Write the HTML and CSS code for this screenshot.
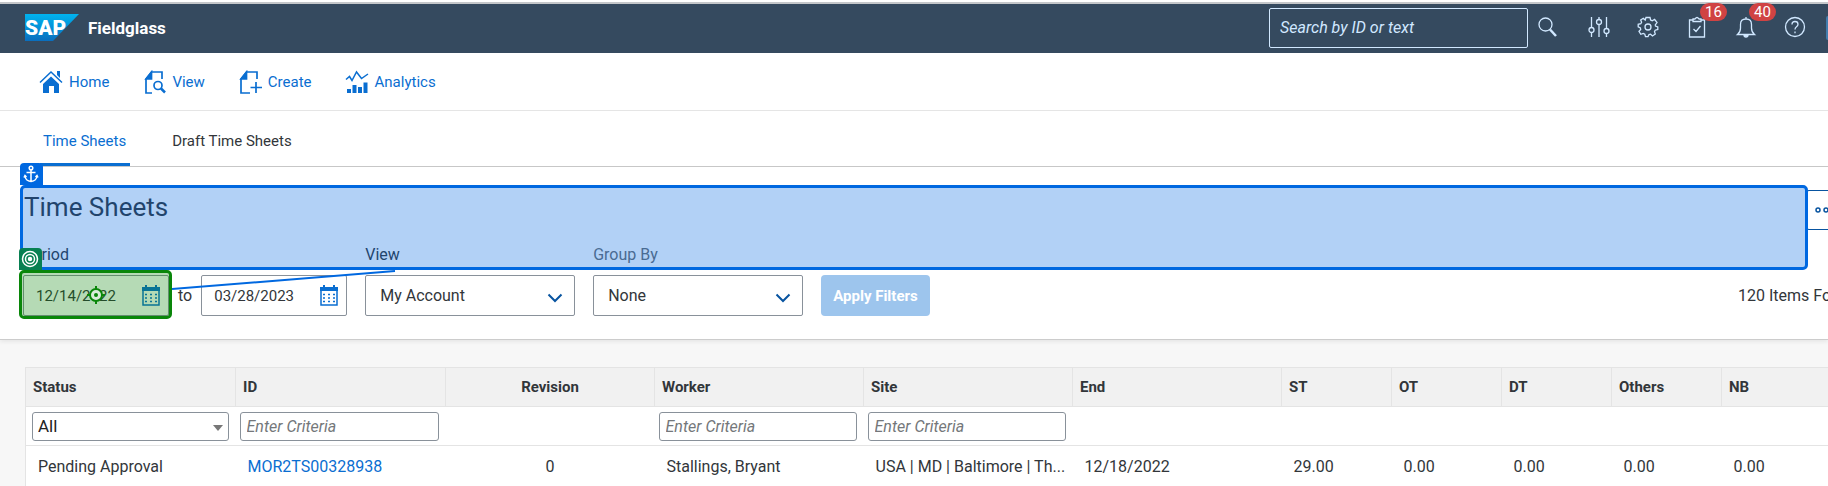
FILE: index.html
```html
<!DOCTYPE html>
<html lang="en">
<head>
<meta charset="utf-8">
<title>Time Sheets - SAP Fieldglass</title>
<link rel="stylesheet" href="styles.css">
</head>
<body>
<header class="shell">
  <a class="brand" href="#">
    <svg class="logo" viewBox="0 0 54 27" width="54" height="27" role="img" aria-label="SAP">
      <defs><linearGradient id="sap" x1="0" y1="0" x2="0" y2="1"><stop offset="0" stop-color="#00b4f0"/><stop offset="1" stop-color="#0a6ebe"/></linearGradient></defs>
      <path d="M0 0H54L28 27H0Z" fill="url(#sap)"/>
      <text x="0" y="21" class="logo-text">SAP</text>
    </svg>
    <span class="product">Fieldglass</span>
  </a>
  <div class="tools">
    <input class="search" type="text" placeholder="Search by ID or text" aria-label="Search by ID or text">
    <button class="tool tool-search" aria-label="Search"><svg viewBox="0 0 22 22"><circle cx="8.500" cy="8.500" r="6.500"/><path d="M13 13.500L19 20" stroke-width="2.500"/></svg></button>
    <button class="tool" aria-label="Preferences"><svg viewBox="0 0 22 22"><path d="M3.500 1V11.500M3.500 17V21M11 1V3M11 9V21M18.500 1V12M18.500 18V21"/><circle cx="3.500" cy="14" r="2.500"/><circle cx="11" cy="6" r="2.500"/><circle cx="18.500" cy="15" r="2.500"/></svg></button>
    <button class="tool" aria-label="Settings"><svg viewBox="0 0 22 22"><path d="M9 1.500H13L13.600 4L15.200 4.700L17.600 3.400L20 6.600L18.300 8.800L18.500 10L20.800 11V13.500L18.200 14.200L17.500 15.600L18.300 18L15.500 20L13.500 18.200L12 18.500L11 20.700H8.500L7.800 18.200L6.300 17.500L3.800 18.300L2 15.400L3.700 13.500L3.400 12L1.200 10.800V8.300L3.800 7.700L4.600 6.200L3.700 3.900L6.300 2.300L8.200 4Z"/><circle cx="11" cy="11" r="3"/></svg></button>
    <button class="tool" aria-label="Tasks"><svg viewBox="0 0 22 22"><path d="M7 4H3.500V21H18.500V4H15M7 3H9Q11 0 13 3H15V5.500H7ZM7.500 13L10 15.500L14.500 10"/></svg><span class="badge">16</span></button>
    <button class="tool" aria-label="Notifications"><svg viewBox="0 0 22 22"><path d="M2.500 18.500H19.500Q16.500 16 16.500 12V8.500Q16.500 3 11 3Q5.500 3 5.500 8.500V12Q5.500 16 2.500 18.500ZM11 3V1"/><path d="M9 19A2 2 0 0 0 13 19Z" fill="currentColor"/></svg><span class="badge">40</span></button>
    <button class="tool" aria-label="Help"><svg viewBox="0 0 22 22"><circle cx="11" cy="11" r="9.500"/><path d="M8 8.500Q8 5.500 11 5.500Q14 5.500 14 8.300Q14 9.800 12.500 10.800Q11 11.800 11 13.500M11 15.500V17.200"/></svg></button>
    <span class="avatar"></span>
  </div>
</header>
<nav class="menu">
  <a href="#"><svg viewBox="0 0 24 24"><path d="M4 14L12 6.500L20 14V23H15V16H10V23H4Z" fill="currentColor" stroke="none"/><path d="M1 12.500L12 2L23 12.500" stroke-width="1.500"/><path d="M18 1H21V8L18 5Z" fill="currentColor" stroke="none"/></svg>Home</a>
  <a href="#"><svg viewBox="0 0 24 24"><path d="M10 23H4V9L9.500 2H20V9"/><path d="M4 9L9.500 2V9Z" fill="currentColor"/><circle cx="16" cy="15.500" r="4"/><path d="M19 18.500L23 22.500" stroke-width="2.500"/></svg>View</a>
  <a href="#"><svg viewBox="0 0 24 24"><path d="M12 23H3V9L8.500 2H19V9"/><path d="M3 9L8.500 2V9Z" fill="currentColor"/><path d="M18 12V23M12.500 17.500H24"/></svg>Create</a>
  <a href="#"><svg viewBox="0 0 24 24"><path d="M1 9.500L4.500 6.500L7 10.500L11.500 2L16.500 8.500L23 4" stroke-width="1.500"/><path d="M2 19H6V23H2ZM7.500 15H11.500V23H7.500ZM13 17H17V23H13ZM18.500 12.500H22.500V23H18.500Z" fill="currentColor" stroke="none"/></svg>Analytics</a>
</nav>
<nav class="tabs">
  <a class="tab active" href="#">Time Sheets</a>
  <a class="tab" href="#">Draft Time Sheets</a>
</nav>
<main>
  <section class="panel">
    <div class="heading">
      <h1>Time Sheets</h1>
      <button class="more" aria-label="More actions"><svg viewBox="0 0 24 8" width="24" height="8"><circle cx="3" cy="4" r="2"/><circle cx="11" cy="4" r="2"/><circle cx="19" cy="4" r="2"/></svg></button>
    </div>
    <form class="filters">
      <div class="field">
        <label for="from">Period</label>
        <div class="range">
          <span class="date"><input id="from" type="text" value="12/14/2022"><svg viewBox="0 0 18 21"><path d="M1 5V20H17V5Z"/><path d="M0 2H18V6H0ZM3 0H5V2H3ZM13 0H15V2H13Z" fill="currentColor" stroke="none"/><path d="M3 9.500H15M3 13H15M3 16.500H15" stroke-dasharray="2 3"/></svg></span>
          <span>to</span>
          <span class="date"><input type="text" value="03/28/2023" aria-label="Period end"><svg viewBox="0 0 18 21"><path d="M1 5V20H17V5Z"/><path d="M0 2H18V6H0ZM3 0H5V2H3ZM13 0H15V2H13Z" fill="currentColor" stroke="none"/><path d="M3 9.500H15M3 13H15M3 16.500H15" stroke-dasharray="2 3"/></svg></span>
        </div>
      </div>
      <div class="field">
        <label for="view">View</label>
        <span class="pick"><select id="view"><option>My Account</option></select><svg viewBox="0 0 16 10"><path d="M1.500 1.500L8 8L14.500 1.500"/></svg></span>
      </div>
      <div class="field">
        <label for="group" class="muted">Group By</label>
        <span class="pick"><select id="group"><option>None</option></select><svg viewBox="0 0 16 10"><path d="M1.500 1.500L8 8L14.500 1.500"/></svg></span>
      </div>
      <button class="apply" type="button" disabled>Apply Filters</button>
      <span class="count">120 Items Fo</span>
    </form>
    <div class="mark anchor-mark"><span class="tag"><svg viewBox="0 0 22 22"><circle cx="11" cy="5" r="1.800"/><path d="M11 7V18M6.500 9.500H15.500M5 13Q5.500 18 11 18.500Q16.500 18 17 13M4 14.500L5 12.500L6.500 14M15.500 14L17 12.500L18 14.500"/></svg></span></div>
    <svg class="link-line" viewBox="0 0 224 20" width="224" height="20"><path d="M0 19L223 1"/></svg>
    <div class="mark target-mark"><span class="tag"><svg viewBox="0 0 22 22"><circle cx="11" cy="11" r="7.500"/><circle cx="11" cy="11" r="4.500"/><circle cx="11" cy="11" r="1.500" fill="currentColor"/></svg></span>
      <svg class="pin" viewBox="0 0 20 20" width="20" height="20"><circle cx="10" cy="10" r="6" fill="#d8ecd8"/><circle cx="10" cy="10" r="2" fill="currentColor" stroke="none"/><path d="M10 1V4M10 16V19M1 10H4M16 10H19"/></svg></div>
  </section>
  <section class="results">
    <table>
      <colgroup><col class="wider"><col class="wider"><col class="wide"><col class="wide"><col class="wide"><col class="wide"><col class="num"><col class="num"><col class="num"><col class="num"><col></colgroup>
      <thead>
        <tr><th>Status</th><th>ID</th><th class="center">Revision</th><th>Worker</th><th>Site</th><th>End</th><th>ST</th><th>OT</th><th>DT</th><th>Others</th><th>NB</th></tr>
        <tr class="criteria"><td><span class="all"><select aria-label="Status"><option>All</option></select></span></td><td><input type="text" placeholder="Enter Criteria" aria-label="ID"></td><td></td><td><input type="text" placeholder="Enter Criteria" aria-label="Worker"></td><td><input type="text" placeholder="Enter Criteria" aria-label="Site"></td><td></td><td></td><td></td><td></td><td></td><td></td></tr>
      </thead>
      <tbody>
        <tr><td>Pending Approval</td><td><a href="#">MOR2TS00328938</a></td><td class="center">0</td><td>Stallings, Bryant</td><td>USA | MD | Baltimore | Th...</td><td>12/18/2022</td><td>29.00</td><td>0.00</td><td>0.00</td><td>0.00</td><td>0.00</td></tr>
      </tbody>
    </table>
  </section>
</main>
</body>
</html>
```
FILE: styles.css
```css
* { box-sizing: border-box; }
body { margin: 0; background: #f7f7f7; color: #32363a; font: 16px/20px Roboto, "Noto Sans", sans-serif; overflow: hidden; }
a { color: #0a6ed1; text-decoration: none; }
svg { fill: none; stroke: currentColor; }
button, input, select { font: inherit; color: inherit; margin: 0; }
button { cursor: pointer; }

.shell { display: flex; justify-content: space-between; align-items: center; height: 53px; padding: 0 0 0 25px; background: #354a5f; border-top: 2px solid #fff; box-shadow: inset 0 2px #c4c7ca; color: #d1e8ff; }
.brand { display: flex; align-items: center; gap: 9px; color: #fff; }
.logo { stroke: none; }
.logo-text { font: 900 21px Roboto, sans-serif; fill: #fff; }
.product { font-size: 17px; font-weight: 700; }
.tools { display: flex; align-items: center; }
.search { width: 259px; height: 40px; padding: 0 10px; background: transparent; border: 1px solid #d1e8ff; border-radius: 2px; }
.search::placeholder { color: #d1e8ff; font-style: italic; opacity: 1; }
.tool { position: relative; width: 22px; height: 22px; margin: 0 27px 2px 0; padding: 0; border: 0; background: none; }
.tool svg { display: block; width: 22px; height: 22px; stroke-width: 1.3; }
.tool-search { margin: 0 29px 2px 9px; }
.badge { position: absolute; left: 14px; top: -13px; min-width: 27px; height: 18px; border-radius: 9px; background: #d04343; color: #fff; font-size: 15px; line-height: 18px; text-align: center; }
.avatar { width: 2px; height: 24px; margin-left: -7px; background: #427cac; border-radius: 2px 0 0 2px; }

.menu { display: flex; gap: 33px; height: 58px; padding: 1px 39px 0; align-items: center; background: #fff; border-bottom: 1px solid #e5e5e5; font-size: 15px; }
.menu a { display: flex; align-items: center; gap: 6px; }
.menu svg { width: 24px; height: 24px; stroke-width: 1.7; }
.tabs { display: flex; gap: 39px; height: 56px; padding: 0 40px; background: #fff; border-bottom: 1px solid #c8c8c8; font-size: 15px; }
.tab { padding: 20px 4px 12px 3px; color: #32363a; }
.tab.active { color: #0a6ed1; border-bottom: 3px solid #0a6ed1; }

.panel { position: relative; padding: 23px 0 23px 23px; background: #fff; border-bottom: 1px solid #ccc; box-shadow: 0 2px 4px #0001; }
.heading { display: flex; justify-content: space-between; height: 55px; }
h1 { margin: 0; padding-left: 1px; font-size: 26px; font-weight: 400; line-height: 34px; }
.more { width: 22px; height: 40px; padding: 0 0 0 8px; background: #fff; border: 1px solid #0854a0; border-right: 0; border-radius: 3px 0 0 3px; color: #0854a0; overflow: hidden; }
.more svg { display: block; stroke-width: 1.5; }
.filters { display: flex; gap: 18px; align-items: flex-end; }
.field { display: flex; flex-direction: column; gap: 10px; }
.field label { line-height: 20px; }
.muted { color: #6a6d70; }
.range { display: flex; align-items: center; gap: 9px; }
.date, .pick { position: relative; display: block; }
.date input { display: block; width: 146px; height: 41px; padding: 0 12px; border: 1px solid #89919a; border-radius: 2px; background: #fff; font-size: 15px; }
.date svg { position: absolute; right: 9px; top: 10px; width: 18px; height: 21px; color: #0a6ed1; stroke-width: 1.5; }
.pick select { display: block; appearance: none; width: 210px; height: 41px; padding: 0 14px; border: 1px solid #89919a; border-radius: 2px; background: #fff; }
.pick svg { position: absolute; right: 12px; top: 18px; width: 16px; height: 10px; color: #0854a0; stroke-width: 2; pointer-events: none; }
.apply { height: 41px; padding: 0 12px; border: 0; border-radius: 4px; background: #9dc5ed; color: #fff; font-size: 15px; font-weight: 700; }
.count { width: 90px; margin-left: auto; line-height: 41px; white-space: nowrap; }

.mark { position: absolute; border: 3px solid; border-radius: 5px; }
.anchor-mark { left: 20px; right: 20px; top: 18px; height: 85px; border-color: #0068e0; background: rgba(0, 104, 224, .3); }
.target-mark { left: 19px; top: 103px; width: 153px; height: 49px; border-color: #098609; background: rgba(9, 134, 9, .3); color: #098609; }
.tag { position: absolute; left: -3px; bottom: calc(100% + 3px); width: 23px; height: 22px; border-radius: 4px 4px 0 0; color: #fff; background: #0068e0; }
.target-mark .tag { background: #088052; }
.tag svg { display: block; height: 22px; stroke-width: 1.5; }
.pin { position: absolute; left: 64px; top: 12px; stroke-width: 2; }
.link-line { position: absolute; left: 172px; top: 103px; color: #0068e0; stroke-width: 2; }

.results { padding: 27px 0 0 25px; }
table { width: 100%; table-layout: fixed; border-collapse: collapse; background: #fff; border-left: 1px solid #e4e4e4; }
.wide { width: 209px; }
.wider { width: 210px; }
.num { width: 110px; }
th { height: 39px; padding: 0 7px; background: #f1f1f1; border: 1px solid #e4e4e4; font-size: 15px; font-weight: 700; text-align: left; }
th:last-child { border-right: 0; }
td { height: 43px; padding: 0 4px 0 12px; border-bottom: 1px solid #e4e4e4; white-space: nowrap; }
th.center, td.center { text-align: center; }
td.center { padding: 0 4px; }
.criteria td { height: 39px; padding: 0 7px 0 4px; }
.criteria td:first-child { padding-left: 6px; }
.criteria input, .criteria select { display: block; width: 100%; height: 29px; padding: 0 6px; border: 1px solid #89919a; border-radius: 3px; background: #fff; }
.criteria input::placeholder { color: #74777a; font-style: italic; opacity: 1; }
.all { position: relative; display: block; }
.criteria select { appearance: none; padding: 0 5px; font-size: 17px; color: #222; }
.all::after { content: ""; position: absolute; right: 6px; top: 13px; border: 5px solid transparent; border-top: 6px solid #777; border-bottom: 0; }
```
